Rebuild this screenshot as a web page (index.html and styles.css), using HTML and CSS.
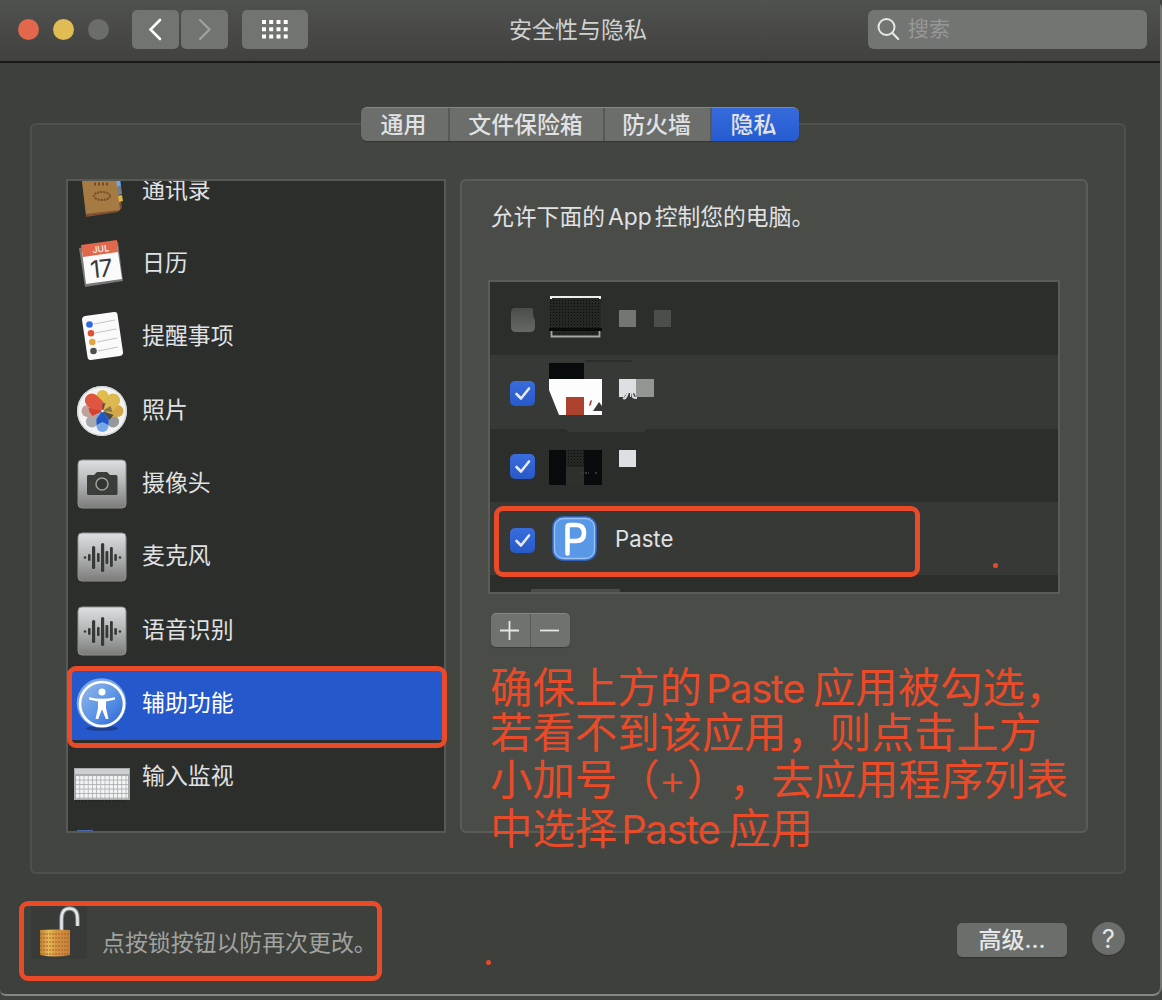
FILE: index.html
```html
<!DOCTYPE html>
<html lang="zh-CN">
<head>
<meta charset="utf-8">
<title>安全性与隐私</title>
<link rel="stylesheet" href="styles.css">
</head>
<body>
<svg class="defs" width="0" height="0">
  <defs>
    <linearGradient id="metal" x1="0" y1="0" x2="0" y2="1"><stop offset="0" stop-color="#dde0e3"/><stop offset=".5" stop-color="#b1b3b3"/><stop offset="1" stop-color="#7b7c7a"/></linearGradient>
    <linearGradient id="sky" x1="0" y1="0" x2="1" y2="1"><stop offset="0" stop-color="#96b7e8"/><stop offset=".5" stop-color="#5e98e6"/><stop offset="1" stop-color="#2c62d3"/></linearGradient>
    <linearGradient id="brass" x1="0" y1="0" x2="1" y2="0"><stop offset="0" stop-color="#b98032"/><stop offset=".3" stop-color="#e6bd55"/><stop offset=".5" stop-color="#d49a43"/><stop offset="1" stop-color="#c27f37"/></linearGradient>
    <linearGradient id="off" x1="0" y1="0" x2="0" y2="1"><stop offset="0" stop-color="#4b4d4a"/><stop offset="1" stop-color="#666865"/></linearGradient>
    <symbol id="wave" viewBox="0 0 50 50">
      <rect x="1" y="1" width="48" height="48" rx="4" fill="url(#metal)" stroke="#8f918f" stroke-width="1"/>
      <g fill="#373936"><circle cx="8" cy="25.500" r="1.300"/><rect x="11" y="22" width="2.600" height="7" rx="1.300"/><rect x="15" y="14" width="3.200" height="23" rx="1.500"/><rect x="20" y="21" width="2.600" height="9" rx="1"/><rect x="24" y="11" width="3.200" height="29" rx="1.500"/><rect x="28.500" y="19" width="2.800" height="13" rx="1"/><rect x="33" y="15" width="2.800" height="20" rx="1.300"/><rect x="37.300" y="22" width="2.600" height="7" rx="1.300"/><circle cx="43" cy="25.500" r="1.300"/></g>
    </symbol>
    <pattern id="keys" width="4.200" height="4.500" patternUnits="userSpaceOnUse" x="2" y="27"><rect width="4.200" height="4.500" fill="#b0b4b6"/><rect width="3.400" height="3.500" rx=".6" fill="#f3f4f4"/></pattern>
    <pattern id="grain" width="3" height="3" patternUnits="userSpaceOnUse"><rect width="3" height="3" fill="#252724"/><rect width="1" height="1" fill="#0a0c0b"/></pattern>
  </defs>
</svg>
<div class="window">
  <header class="titlebar">
    <div class="lights"><i class="red"></i><i class="yellow"></i><i class="gray"></i></div>
    <div class="nav">
      <span class="tbtn"><svg width="47" height="39"><path d="M28 10 18.500 19.500 28 29" fill="none" stroke="#fff" stroke-width="2.600" stroke-linecap="round"/></svg></span>
      <span class="tbtn"><svg width="47" height="39"><path d="M19 10 28.500 19.500 19 29" fill="none" stroke="#a0a2a0" stroke-width="2.200" stroke-linecap="round"/></svg></span>
    </div>
    <span class="tbtn grid"><svg width="66" height="39" fill="#fff"><path d="M20 10h4v4h-4zm7.200 0h4v4h-4zm7.300 0h4v4h-4zm7.200 0h4v4h-4zM20 17.200h4v4h-4zm7.200 0h4v4h-4zm7.300 0h4v4h-4zm7.200 0h4v4h-4zM20 24.500h4v4h-4zm7.200 0h4v4h-4zm7.300 0h4v4h-4zm7.200 0h4v4h-4z"/></svg></span>
    <h1>安全性与隐私</h1>
    <div class="search"><svg width="24" height="26"><circle cx="9.500" cy="11" r="8" fill="none" stroke="#e6e7e6" stroke-width="2"/><path d="m15.200 16.800 6 6.200" stroke="#e6e7e6" stroke-width="2.200" stroke-linecap="round"/></svg><span>搜索</span></div>
  </header>

  <main class="group">
    <nav class="tabs"><span class="t1">通用</span><span class="t2">文件保险箱</span><span class="t3">防火墙</span><span class="t4 active">隐私</span></nav>
    <div class="columns">
      <ul class="services">
        <li><svg class="icon" width="56" height="56" viewBox="0 0 56 56"><path d="m7 10 36-5 5 40-4 4-32 5z" fill="#7f5033"/><path d="m7 9 34-5 5 43-34 4z" fill="#a67b43"/><path d="M42 15h4l1 8-4 1z" fill="#6ea6ee"/><path d="m43 24 4-1 1 8-4 1z" fill="#777f88"/><path d="m44 33 4-1 1 6-4 1z" fill="#dfb645"/><ellipse cx="28" cy="33" rx="8" ry="4" fill="none" stroke="#754c2b" stroke-width="2" stroke-dasharray="2 1"/><path d="M20 21h14" stroke="#754c2b" stroke-width="3" stroke-dasharray="2 2"/></svg><span>通讯录</span></li>
        <li><svg class="icon" width="56" height="56" viewBox="0 0 56 56"><path d="m5 12 39-6 5 39-38 6z" fill="#777976"/><path d="m8 15 35-6 5 34-36 5z" fill="#fafafa"/><path d="m7 9 36-5 1 12-35 5z" fill="#e2684c"/><text class="jul" x="18.500" y="17" transform="rotate(-7 20 16)">JUL</text><text class="day" x="16" y="41" transform="rotate(-6 28 30)">17</text></svg><span>日历</span></li>
        <li><svg class="icon" width="56" height="56" viewBox="0 0 56 56"><path d="m11 7 29-4q3-.5 3.400 2l5.600 38q.4 3-3 4l-29 4q-3 .4-3.500-3L8 11q0-3.500 3-4z" fill="#fafafa"/><g stroke="#c4c6c8" stroke-width="1.200"><path d="m20 15 21-4M21 24l21-4M23 33l20-4M24 42l20-4"/></g><circle cx="15.500" cy="15.500" r="3.300" fill="#3068de"/><circle cx="17" cy="24.300" r="3.300" fill="#df5135"/><circle cx="18.300" cy="33" r="3.300" fill="#e3a445"/><circle cx="19.500" cy="42" r="3.300" fill="#4d4f4f"/></svg><span>提醒事项</span></li>
        <li><svg class="icon" width="56" height="56" viewBox="0 0 56 56"><circle cx="28" cy="28" r="25" fill="#f1f2f2"/><circle cx="28" cy="28" r="24.300" fill="none" stroke="#d1d4d5" stroke-width="1.200"/><g transform="translate(28.500 28)"><rect x="-6" y="-21" width="12" height="21" rx="6" fill="#a8a9ac" transform="rotate(225)"/><rect x="-6" y="-21" width="12" height="21" rx="6" fill="#969999" transform="rotate(135)"/><rect x="-6" y="-21" width="12" height="21" rx="6" fill="#c2a19c" transform="rotate(270)"/><rect x="-6" y="-21" width="12" height="21" rx="6" fill="#d3a747" transform="rotate(90)"/><rect x="-6" y="-21" width="12" height="21" rx="6" fill="#e2bd4e"/><rect x="-7" y="-22" width="14" height="22" rx="7" fill="#ddb94f" transform="rotate(45)"/><rect x="-6" y="-21" width="12" height="21" rx="6" fill="#76a8ea" transform="rotate(180)"/><rect x="-7" y="-22" width="14" height="22" rx="7" fill="#df5640" transform="rotate(315)"/><path d="m0 0-6 8v6l6-3 6 3V8z" fill="#2157c2"/><path d="m0 0-10 5-3-4-1-4z" fill="#d1432d"/><path d="m0 0 10 1-2-6z" fill="#8b7647"/><path d="m0 0 11 4-4 5zM0 0v-7l3-1z" fill="#494b48"/><circle r="1.200" fill="#fff"/></g></svg><span>照片</span></li>
        <li><svg class="icon" width="56" height="56" viewBox="0 0 56 56"><rect x="4" y="4" width="48" height="48" rx="4" fill="url(#metal)" stroke="#8f918f"/><path d="M14 19h6l3-3h10l3 3h6q1.500 0 1.500 1.500v17q0 1.500-1.500 1.500H14.500q-1.500 0-1.500-1.500v-17q0-1.500 1-1.500z" fill="#3b3d3a"/><circle cx="28" cy="28" r="6" fill="#333532" stroke="#9ea09e" stroke-width="1.500"/></svg><span>摄像头</span></li>
        <li><svg class="icon" width="56" height="56"><use href="#wave" x="3" y="3" width="50" height="50"/></svg><span>麦克风</span></li>
        <li><svg class="icon" width="56" height="56"><use href="#wave" x="3" y="3" width="50" height="50"/></svg><span>语音识别</span></li>
        <li class="selected"><svg class="icon" width="56" height="56" viewBox="0 0 56 56"><ellipse cx="28" cy="52.500" rx="16" ry="2.300" fill="#1d3f8e"/><circle cx="27.500" cy="27" r="24.800" fill="#77a6ea"/><circle cx="28" cy="28" r="22" fill="url(#sky)" stroke="#fff" stroke-width="2.600"/><circle cx="28" cy="16" r="3.500" fill="#fff"/><path d="M15 21.300q13 3 26 0v2.300l-9 1.800v6.500L34.500 43h-2.700L28.300 34h-.6l-3.500 9h-2.700L24 31.900v-6.500l-9-1.800z" fill="#fff"/></svg><span>辅助功能</span></li>
        <li><svg class="icon" width="56" height="56" viewBox="0 0 56 56"><rect x="0" y="19" width="56" height="32" fill="#a6aaac"/><path d="M1 20h54v5H1z" fill="#cdd0d1"/><rect x="2" y="27" width="52" height="22.500" fill="url(#keys)"/><path d="M2 52h50" stroke="#111" stroke-dasharray="1 2"/></svg><span>输入监视</span></li>
        <li class="peek"><i></i></li>
      </ul>

      <section class="panel">
        <p class="prompt">允许下面的<b>App</b>控制您的电脑。</p>
        <div class="apps">
          <div class="row"><svg width="200" height="73"><path d="M25 26h16q3 0 2 4 0 5 2 8v7q0 5-5 5H26q-5 0-5-5V31q0-5 4-5z" fill="url(#off)"/><rect x="60" y="15" width="51" height="40" rx="2" fill="url(#grain)"/><path d="M61 17v-2h49v2" stroke="#eee" stroke-width="2" fill="none"/><path d="M59 46h53v3H59z" fill="#080a09"/><path d="M61.500 49v5.500h48V49" stroke="#a6a8a6" stroke-width="1.800" fill="none"/><path d="M129 28h17v17h-17z" fill="#747674"/><path d="M164 28h17v17h-17z" fill="#4c4e4b"/></svg></div>
          <div class="row alt"><i class="check"><svg width="24" height="24"><path d="m6.500 13 4.500 4.500L19 7.500" fill="none" stroke="#e7e9ec" stroke-width="2.600" stroke-linecap="round" stroke-linejoin="round"/></svg></i><svg width="200" height="73"><path d="M59 8h35v16H59z" fill="#080b0c"/><path d="M95 5h45l4 2H95z" fill="#2c2e2b"/><path d="M59 24h53v36H69l-6-15-4-10z" fill="#fdfdfd"/><path d="M76 42h18v18H76z" fill="#ac412d"/><path d="m103 56 6-9 3 4v5z" fill="#373936"/><path d="m100 46 2-1-1 5-2 1z" fill="#a54a36"/><path d="M129 24h17v18h-17z" fill="#dde0e3"/><path d="M146 24h18v18h-18z" fill="#949694"/><path d="M134 42l3-4h3v4zm7 0v-4h3l2 4z" fill="#373936"/><path d="m138 38-2 4q-1 2-3 1m9-5 1 4q1 1 4 1" fill="none" stroke="#dde0e3" stroke-width="2"/></svg></div>
          <div class="row"><i class="check"><svg width="24" height="24"><path d="m6.500 13 4.500 4.500L19 7.500" fill="none" stroke="#e7e9ec" stroke-width="2.600" stroke-linecap="round" stroke-linejoin="round"/></svg></i><svg width="200" height="73"><path d="M75 0h82l-3 3H79z" fill="#373936"/><path d="M59 21h53v35H59z" fill="#080b0c"/><path d="M76 21h18v17H76z" fill="url(#grain)"/><path d="M76 38h18v18H76z" fill="#2e302d"/><path d="M89 44h10m6 0h3" stroke="#353734" stroke-width="2" stroke-dasharray="2 1"/><path d="M129 21h17v17h-17z" fill="#dde0e3"/></svg></div>
          <div class="row alt"><i class="check"><svg width="24" height="24"><path d="m6.500 13 4.500 4.500L19 7.500" fill="none" stroke="#e7e9ec" stroke-width="2.600" stroke-linecap="round" stroke-linejoin="round"/></svg></i><svg class="paste-icon" width="46" height="46"><rect x="1" y="1" width="43" height="43" rx="10" fill="#5998e6" stroke="#2e6cdc" stroke-width="1.500"/><rect x="2.500" y="2.500" width="40" height="40" rx="9" fill="none" stroke="#9dc1f0" stroke-width="1.300"/><path d="M15.500 37.500V11Q15.500 9 18 9h6q8 0 8 8t-8 8H17" fill="none" stroke="#fff" stroke-width="4.600" stroke-linecap="round"/></svg><span class="app-name">Paste</span></div>
          <div class="row last"><i></i></div>
        </div>
        <div class="plusminus"><span><svg width="39" height="33"><path d="M9 16.500h19M18.500 7v19" stroke="#e5e7e5" stroke-width="1.800"/></svg></span><span><svg width="39" height="33"><path d="M9 16.500h19" stroke="#e5e7e5" stroke-width="1.800"/></svg></span></div>
      </section>
    </div>
  </main>

  <footer class="footer">
    <div class="lock">
      <svg width="56" height="56" viewBox="0 0 56 56"><path d="M0 0h56v54H0z" fill="#393b38"/><path d="M30.500 25V14q0-10.500 8-10.500t8 10.500v7" fill="none" stroke="#7e8080" stroke-width="4.600"/><path d="M30.500 25V14q0-10.500 8-10.500t8 10.500v7" fill="none" stroke="#e5e7e8" stroke-width="2.600"/><path d="M9 25q15-1 30 0v25q-15 3-30 0z" fill="url(#brass)"/><path d="M9 29h30M9 33h30M9 37h30M9 41h30M9 45h30M9 49h30" stroke="#b5562b" stroke-width="1" stroke-dasharray="2 1"/></svg>
      <span>点按锁按钮以防再次更改。</span>
    </div>
    <button class="advanced">高级...</button>
    <button class="help">?</button>
  </footer>

  <div class="mark mark-service"></div>
  <div class="mark mark-app"></div>
  <div class="mark mark-lock"></div>
  <i class="dot d1"></i><i class="dot d2"></i>
  <div class="note">
    <p>确保上方的<b>Paste</b>应用被勾选，</p>
    <p>若看不到该应用，则点击上方</p>
    <p>小加号（<em>+</em>），去应用程序列表</p>
    <p>中选择<b>Paste</b>应用</p>
  </div>
</div>
</body>
</html>
```
FILE: styles.css
```css
* { box-sizing: border-box; }
body { margin: 0; background: #41433f; overflow: hidden; font: 22.900px/32px Inter, "Noto Sans CJK SC", sans-serif; color: #e0e2e3; text-spacing-trim: space-all; }
h1, p, ul { margin: 0; padding: 0; font-weight: 400; }
svg { display: block; flex: none; }
.defs { position: absolute; }
.window { position: relative; width: 1162px; height: 996px; background: #3e403c; border-right: 2px solid #747673; border-bottom: 2px solid #858784; border-radius: 0 9px 9px 6px; }

.titlebar { display: flex; align-items: center; height: 63px; padding: 0 13px 3px 18px; background: linear-gradient(#50524f, #41413f); border-bottom: 2px solid #171917; }
.lights { display: flex; gap: 14px; margin-right: 23px; }
.lights i { width: 21px; height: 21px; border-radius: 50%; }
.red { background: #e2674b; }
.yellow { background: #dfbd54; }
.gray { background: #6b6d6a; }
.nav { display: flex; gap: 2px; margin-right: 14px; }
.tbtn { height: 39px; background: #727471; border-radius: 5px; }
.titlebar h1 { width: 138px; margin-left: 201px; padding-top: 1px; font-size: 23px; white-space: nowrap; color: #d0d2d0; }
.search { display: flex; align-items: center; gap: 7px; width: 279px; height: 39px; margin-left: auto; padding-left: 9px; background: #737572; border-radius: 6px; color: #969896; font-size: 21px; }

.group { height: 751px; margin: 60px 34px 0 30px; background: #434541; border: 2px solid #4e504d; border-radius: 6px; }
.tabs { display: flex; width: 438px; height: 34px; margin: -18px 0 38px 329px; border-radius: 6px; overflow: hidden; background: #6c6e6b; box-shadow: 0 1px 1px #333532; font-weight: 500; text-align: center; border-top: 1px solid #868885; }
.tabs span { padding-right: 2px; border-right: 2px solid #575956; line-height: 34px; }
.t1 { width: 89px; }
.t2 { width: 155px; }
.t3 { width: 107px; }
.tabs .t4 { flex: 1; padding-right: 4px; border: 0; background: linear-gradient(#376bdc, #245bd0); }
.columns { display: flex; gap: 14px; padding-left: 34px; }

.services { width: 380px; height: 654px; overflow: hidden; list-style: none; background: #2c2e2b; border: 2px solid #575956; }
.services li { display: flex; align-items: center; gap: 12px; height: 73.35px; padding-left: 6px; }
.services li:first-child { margin-top: -28px; }
.services .selected { background: linear-gradient(#2c2e2b 4px, #2458cb 4px); color: #fff; }
.services .icon { position: relative; top: 1px; }
.services .peek { align-items: flex-start; padding: 17px 0 0 9px; height: 25px; }
.peek i { width: 16px; height: 3px; background: #4a6ba9; }
.jul { font: 600 9px Inter, sans-serif; fill: #f5e5e0; }
.day { font: 400 24px Inter, sans-serif; fill: #373936; letter-spacing: -1px; }

.panel { width: 628px; height: 654px; padding: 20px 0 0 26px; background: #4a4c48; border: 2px solid #5a5c58; border-radius: 6px; }
.prompt { padding-left: 3px; white-space: nowrap; font-size: 22.800px; }
.prompt b { font-weight: 400; margin: 0 3px; }
.apps { width: 572px; height: 314px; margin: 47px 0 19px; border: 2px solid #5a5c59; background: #2c2e2b; }
.row { display: flex; height: 73.3px; align-items: center; }
.row.alt { background: #373936; }
.check { flex: none; width: 25px; height: 25px; margin: 3px -45px 0 20px; background: linear-gradient(#396cdd, #2859c9); border-radius: 5px; z-index: 1; }
.paste-icon { margin-left: 62px; }
.app-name { margin-left: 17px; font-size: 22.200px; }
.row.last { height: 17px; align-items: flex-end; }
.last i { width: 89px; height: 3px; margin-left: 41px; background: #4a4c48; }
.plusminus { display: flex; width: 79px; height: 34px; border-radius: 5px; background: #70726f; margin-left: 3px; border-top: 1px solid #858784; box-shadow: 0 1px 1px #3b3d3a; }
.plusminus span + span { border-left: 1px solid #585a57; }

.footer { display: flex; align-items: center; padding: 31px 35px 0 31px; }
.lock { display: flex; align-items: center; gap: 15px; color: #a1a3a1; margin-right: auto; white-space: nowrap; }
.lock span { padding-top: 19px; font-size: 22.900px; }
button { font: 500 23px/32px Inter, "Noto Sans CJK SC", sans-serif; color: #e4e6e7; border: 0; padding: 0; background: #6c6e6b; box-shadow: 0 1px 1px #31332f; }
.advanced { width: 110px; height: 34px; margin: 14px 25px 0 0; border-radius: 5px; }
.help { width: 33px; height: 33px; margin-top: 11px; border-radius: 50%; font-size: 25px; font-weight: 400; }

.mark { position: absolute; border: 5px solid #e94b29; border-radius: 9px; }
.mark-service { left: 67px; top: 666px; width: 380px; height: 82px; }
.mark-app { left: 494px; top: 506px; width: 426px; height: 71px; }
.mark-lock { left: 19px; top: 901px; width: 363px; height: 80px; }
.dot { position: absolute; width: 5px; height: 5px; border-radius: 50%; background: #e94b29; }
.d1 { left: 993px; top: 563px; }
.d2 { left: 486px; top: 960px; }
.note { position: absolute; left: 490px; top: 665px; color: #e94b29; font-size: 42.400px; font-weight: 300; line-height: 45px; white-space: nowrap; display: grid; grid-template-rows: 45px 47px 49px 45px; }
.note b, .note em { display: inline-block; font-style: normal; font-weight: 300; }
.note b { font-size: 40px; font-weight: 400; width: 111px; padding-left: 4px; letter-spacing: -1.400px; }
.note em { width: 27px; text-indent: -1px; }
```
